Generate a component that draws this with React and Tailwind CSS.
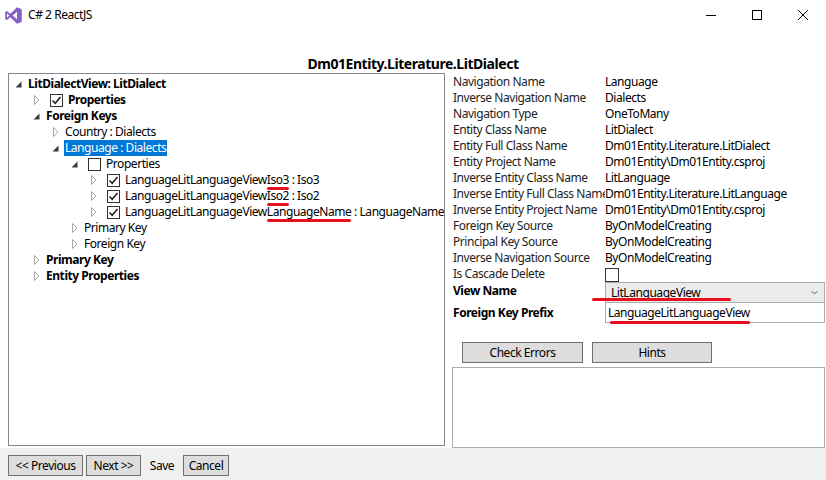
import React from "react";

const RED = "bg-[#e8101e]";

function Mark({ children }) {
  return (
    <span className="relative inline-block">
      {children}
      <span className={`absolute left-[0px] right-[0px] bottom-[-2px] h-[3px] rounded-full ${RED}`} />
    </span>
  );
}

function Expanded() {
  return (
    <svg width="7" height="7" viewBox="0 0 7 7">
      <polygon points="6.5,0.5 6.5,6.5 0.5,6.5" fill="#3c3c3c" />
    </svg>
  );
}

function Collapsed() {
  return (
    <svg width="6" height="10" viewBox="0 0 6 10">
      <polygon points="0.5,0.5 5,5 0.5,9.5" fill="none" stroke="#a6a6a6" strokeWidth="1" />
    </svg>
  );
}

function Check({ checked }) {
  return (
    <span className="ml-[4px] mr-[5px] flex h-[13px] w-[13px] shrink-0 items-center justify-center border border-[#333333] bg-white">
      {checked && (
        <svg width="11" height="11" viewBox="0 0 11 11">
          <path d="M1.5 5.5 L4.2 8.3 L9.5 2" fill="none" stroke="#222" strokeWidth="1.6" />
        </svg>
      )}
    </span>
  );
}

const levelPad = ["pl-[0px]", "pl-[18px]", "pl-[37px]", "pl-[56px]", "pl-[75px]"];

function Row({ level, expanded, check, bold, selected, children }) {
  return (
    <div className={`flex h-[16px] items-center ${levelPad[level]}`}>
      <span className="flex w-[19px] shrink-0 items-center justify-center">
        {expanded ? <Expanded /> : <Collapsed />}
      </span>
      {check !== undefined && <Check checked={check} />}
      <span
        className={`whitespace-nowrap leading-[16px] ${bold ? "font-bold" : ""} ${
          selected ? "bg-[#0078d7] px-[1px] ml-[-1px] text-white" : ""
        }`}
      >
        {children}
      </span>
    </div>
  );
}

const props = [
  ["Navigation Name", "Language"],
  ["Inverse Navigation Name", "Dialects"],
  ["Navigation Type", "OneToMany"],
  ["Entity Class Name", "LitDialect"],
  ["Entity Full Class Name", "Dm01Entity.Literature.LitDialect"],
  ["Entity Project Name", "Dm01Entity\\Dm01Entity.csproj"],
  ["Inverse Entity Class Name", "LitLanguage"],
  ["Inverse Entity Full Class Name", "Dm01Entity.Literature.LitLanguage"],
  ["Inverse Entity Project Name", "Dm01Entity\\Dm01Entity.csproj"],
  ["Foreign Key Source", "ByOnModelCreating"],
  ["Principal Key Source", "ByOnModelCreating"],
  ["Inverse Navigation Source", "ByOnModelCreating"],
];

function VSIcon() {
  return (
    <svg width="17" height="17" viewBox="0 0 24 24">
      <path
        fillRule="evenodd"
        fill="#8661c5"
        d="M17 0.5 L7.6 9.4 L2.6 5.5 L0.3 6.6 V17.4 L2.6 18.5 L7.6 14.6 L17 23.5 L23.7 20.8 V3.2 Z M2.8 8.9 V15.1 L5.9 12 Z M17 6.8 V17.2 L10.8 12 Z"
      />
    </svg>
  );
}

function WinBtn({ children }) {
  return (
    <button className="flex h-[30px] w-[46px] items-center justify-center">{children}</button>
  );
}

export default function App() {
  return (
    <div className="flex h-[480px] w-[826px] flex-col overflow-hidden bg-white font-['Segoe_UI','Noto_Sans',sans-serif] text-[12px] tracking-[-0.45px] text-black">
      {/* Title bar */}
      <div className="flex h-[30px] shrink-0 items-center bg-white">
        <div className="ml-[5px] flex items-center">
          <VSIcon />
        </div>
        <span className="ml-[6px] text-[12px] leading-[30px] text-black">C# 2 ReactJS</span>
        <div className="ml-auto flex">
          <WinBtn>
            <span className="block h-[1px] w-[10px] bg-black" />
          </WinBtn>
          <WinBtn>
            <span className="block h-[10px] w-[10px] border border-black" />
          </WinBtn>
          <WinBtn>
            <svg width="10" height="10" viewBox="0 0 10 10">
              <path d="M0 0 L10 10 M10 0 L0 10" stroke="#000" strokeWidth="1" />
            </svg>
          </WinBtn>
        </div>
      </div>

      {/* Main */}
      <div className="flex flex-1 flex-col bg-white">
        <div className="flex h-[43px] items-end justify-center text-[14px] font-bold leading-[18px]">
          Dm01Entity.Literature.LitDialect
        </div>
        <div className="flex pl-[8px]">
          {/* Tree */}
          <div className="h-[373px] w-[437px] shrink-0 overflow-hidden border border-[#828790] bg-white pt-[2px]">
            <Row level={0} expanded bold>LitDialectView: LitDialect</Row>
            <Row level={1} check={true} bold>Properties</Row>
            <Row level={1} expanded bold>Foreign Keys</Row>
            <Row level={2}>Country : Dialects</Row>
            <Row level={2} expanded selected>Language : Dialects</Row>
            <Row level={3} expanded check={false}>Properties</Row>
            <Row level={4} check={true}>
              LanguageLitLanguageView<Mark>Iso3</Mark> : Iso3
            </Row>
            <Row level={4} check={true}>
              LanguageLitLanguageView<Mark>Iso2</Mark> : Iso2
            </Row>
            <Row level={4} check={true}>
              LanguageLitLanguageView<Mark>LanguageName</Mark> : LanguageName
            </Row>
            <Row level={3}>Primary Key</Row>
            <Row level={3}>Foreign Key</Row>
            <Row level={1} bold>Primary Key</Row>
            <Row level={1} bold>Entity Properties</Row>
          </div>

          {/* Right panel */}
          <div className="ml-[7px] flex w-[373px] flex-col pt-[1px]">
            {props.map(([k, v]) => (
              <div key={k} className="flex h-[16px] items-center leading-[16px]">
                <span className="w-[153px] shrink-0 overflow-hidden whitespace-nowrap pl-[1px] text-[#1e1e1e]">{k}</span>
                <span className="whitespace-nowrap">{v}</span>
              </div>
            ))}
            <div className="flex h-[16px] items-center leading-[16px]">
              <span className="w-[153px] shrink-0 pl-[1px] text-[#1e1e1e]">Is Cascade Delete</span>
              <span className="mt-[1px] h-[14px] w-[14px] border border-[#333333] bg-white" />
            </div>
            <div className="flex h-[21px] items-start">
              <span className="w-[153px] shrink-0 pl-[1px] pt-[1px] font-bold leading-[16px]">View Name</span>
              <div className="relative flex h-[21px] w-[220px] items-center justify-between border border-[#acacac] bg-[#ebebeb] pl-[5px] pr-[6px]">
                <span>LitLanguageView</span>
                <svg width="7" height="5" viewBox="0 0 7 5">
                  <path d="M0.5 1 L3.5 4 L6.5 1" fill="none" stroke="#606060" strokeWidth="1" />
                </svg>
                <span className={`absolute left-[-14px] top-[15px] h-[3px] w-[139px] rounded-full ${RED}`} />
              </div>
            </div>
            <div className="flex h-[20px] items-center">
              <span className="w-[153px] shrink-0 pl-[1px] font-bold">Foreign Key Prefix</span>
              <div className="relative flex h-[20px] w-[220px] items-center border border-[#abadb3] border-t-0 bg-white pl-[2px]">
                <span>LanguageLitLanguageView</span>
                <span className={`absolute left-[4px] top-[18px] h-[3px] w-[140px] rounded-full ${RED}`} />
              </div>
            </div>
            <div className="mt-[19px] flex gap-[9px] pl-[10px]">
              <button className="h-[21px] w-[121px] border border-[#707070] bg-[#dddddd] leading-[19px]">Check Errors</button>
              <button className="h-[21px] w-[120px] border border-[#707070] bg-[#dddddd] leading-[19px]">Hints</button>
            </div>
            <div className="mt-[4px] h-[81px] w-[373px] border border-[#abadb3] bg-white" />
          </div>
        </div>
      </div>

      {/* Bottom bar */}
      <div className="flex h-[34px] shrink-0 items-start gap-[3px] bg-[#f0f0f0] pl-[8px] pt-[7px]">
        <button className="h-[21px] w-[75px] border border-[#707070] bg-[#dddddd] leading-[19px]">&lt;&lt; Previous</button>
        <button className="h-[21px] w-[55px] border border-[#707070] bg-[#dddddd] leading-[19px]">Next &gt;&gt;</button>
        <button className="h-[21px] w-[36px] leading-[19px]">Save</button>
        <button className="h-[21px] w-[46px] border border-[#707070] bg-[#dddddd] leading-[19px]">Cancel</button>
      </div>
    </div>
  );
}
